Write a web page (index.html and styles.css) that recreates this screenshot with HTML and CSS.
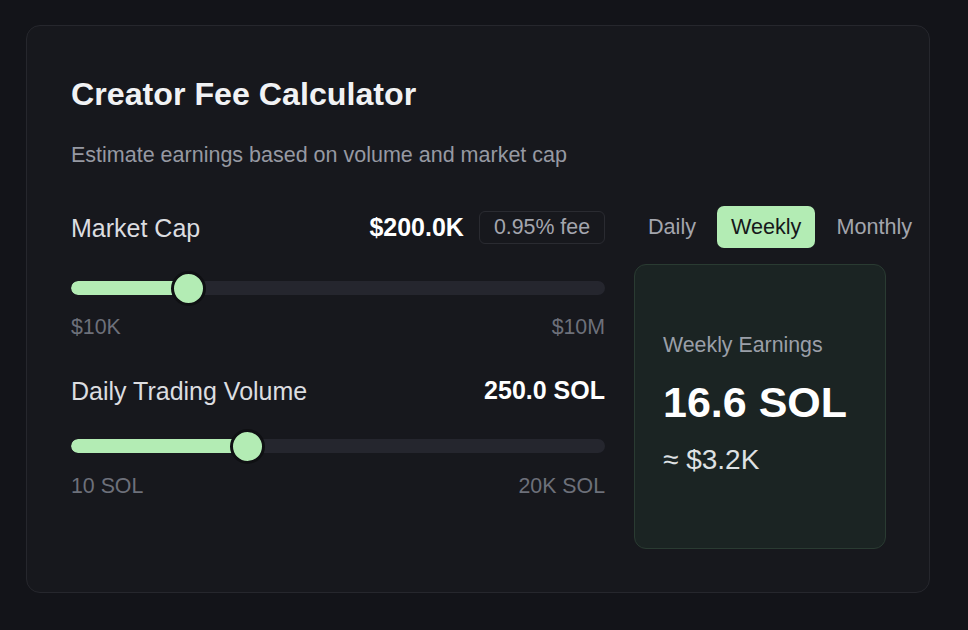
FILE: index.html
```html
<!DOCTYPE html>
<html lang="en">
<head>
<meta charset="utf-8">
<title>Creator Fee Calculator</title>
<link rel="stylesheet" href="styles.css">
</head>
<body>
<section class="card">
  <h1 class="title">Creator Fee Calculator</h1>
  <p class="subtitle">Estimate earnings based on volume and market cap</p>
  <div class="main">
    <div class="inputs">
      <div class="field">
        <div class="field-head">
          <span class="label">Market Cap</span>
          <span class="head-right">
            <span class="value">$200.0K</span>
            <span class="badge">0.95% fee</span>
          </span>
        </div>
        <div class="slider">
          <div class="track"><div class="fill" style="width: 22%"></div></div>
          <div class="thumb" style="left: 22%"></div>
        </div>
        <div class="range"><span>$10K</span><span>$10M</span></div>
      </div>
      <div class="field field-second">
        <div class="field-head">
          <span class="label">Daily Trading Volume</span>
          <span class="value">250.0 SOL</span>
        </div>
        <div class="slider">
          <div class="track"><div class="fill" style="width: 33%"></div></div>
          <div class="thumb" style="left: 33%"></div>
        </div>
        <div class="range"><span>10 SOL</span><span>20K SOL</span></div>
      </div>
    </div>
    <div class="output">
      <div class="tabs">
        <button class="tab">Daily</button>
        <button class="tab tab-active">Weekly</button>
        <button class="tab">Monthly</button>
      </div>
      <div class="result">
        <div class="result-label">Weekly Earnings</div>
        <div class="result-value">16.6 SOL</div>
        <div class="result-usd">≈ $3.2K</div>
      </div>
    </div>
  </div>
</section>
</body>
</html>
```

FILE: styles.css
```css
* { box-sizing: border-box; }

html, body {
  margin: 0;
  padding: 0;
  background: #131419;
  font-family: "Liberation Sans", Arial, sans-serif;
  color: #e6e7ea;
}

body {
  width: 968px;
  height: 630px;
  overflow: hidden;
}

.card {
  margin: 25px 0 0 26px;
  width: 904px;
  height: 568px;
  background: #17181d;
  border: 1px solid #26272d;
  border-radius: 14px;
  padding: 0 44px;
}

.title {
  margin: 51px 0 0;
  font-size: 32.2px;
  line-height: 34px;
  font-weight: 700;
  color: #f1f2f4;
}

.subtitle {
  margin: 33px 0 0;
  font-size: 21.5px;
  line-height: 22px;
  color: #9699a2;
}

.main {
  display: flex;
  gap: 29px;
  margin-top: 40px;
}

.inputs {
  width: 534px;
  flex: none;
}

.field-head {
  display: flex;
  justify-content: space-between;
  align-items: center;
  height: 42px;
}

.label {
  font-size: 25px;
  color: #dcdde0;
  position: relative;
  top: 1px;
}

.head-right {
  display: flex;
  align-items: center;
  gap: 15px;
}

.value {
  font-size: 25px;
  font-weight: 700;
  color: #ffffff;
}

.badge {
  display: inline-flex;
  align-items: center;
  height: 33px;
  padding: 0 14px;
  border: 1px solid #2a2b31;
  border-radius: 6px;
  font-size: 21.33px;
  color: #a4a6ae;
}

.slider {
  position: relative;
  height: 34px;
  margin-top: 23px;
  display: flex;
  align-items: center;
}

.track {
  width: 100%;
  height: 14px;
  border-radius: 7px;
  background: #25262e;
  overflow: hidden;
}

.fill {
  height: 100%;
  background: #b3ecb4;
  border-radius: 7px 0 0 7px;
}

.thumb {
  position: absolute;
  top: 0;
  width: 35px;
  height: 35px;
  margin-left: -17px;
  border-radius: 50%;
  background: #b3ecb4;
  border: 3px solid #0f1013;
}

.range {
  display: flex;
  justify-content: space-between;
  margin-top: 11px;
  font-size: 21.33px;
  line-height: 22px;
  color: #6d707a;
}

.field-second {
  margin-top: 37px;
}

.field-second .field-head {
  height: 30px;
}

.field-second .slider {
  margin-top: 24px;
}

.field-second .range {
  margin-top: 12px;
}

.output {
  width: 252px;
  flex: none;
}

.tabs {
  display: flex;
  gap: 7px;
  white-space: nowrap;
}

.tab {
  height: 42px;
  padding: 0 14px;
  border: none;
  border-radius: 7px;
  background: transparent;
  font-family: inherit;
  font-size: 21.6px;
  color: #a3a5ad;
  flex: none;
}

.tab-active {
  padding: 0 14px;
  background: #b3ecb4;
  color: #16181a;
}

.result {
  margin-top: 16px;
  height: 285px;
  border: 1px solid #2a3b32;
  border-radius: 12px;
  background: #1b2423;
  padding: 0 28px 5px;
  display: flex;
  flex-direction: column;
  justify-content: center;
}

.result-label {
  font-size: 21.33px;
  line-height: 24px;
  color: #9a9fa8;
}

.result-value {
  margin-top: 22px;
  font-size: 43px;
  line-height: 46px;
  font-weight: 700;
  color: #ffffff;
}

.result-usd {
  margin-top: 20px;
  font-size: 28px;
  line-height: 30px;
  color: #dfe1e3;
}
```
